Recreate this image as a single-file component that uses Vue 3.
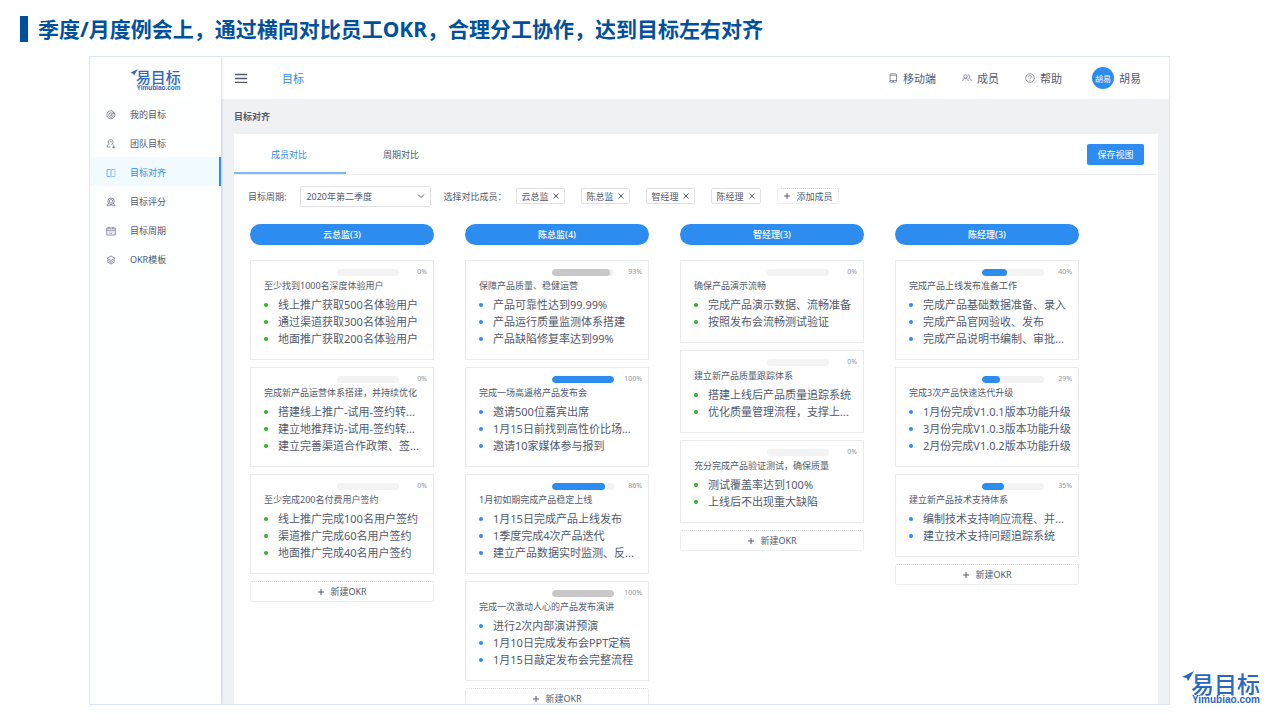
<script setup>
import { ref } from 'vue'

const navItems = [
  { label: '我的目标', icon: 'target' },
  { label: '团队目标', icon: 'team' },
  { label: '目标对齐', icon: 'align' },
  { label: '目标评分', icon: 'score' },
  { label: '目标周期', icon: 'calendar' },
  { label: 'OKR模板', icon: 'layers' },
]
const activeNav = ref('目标对齐')

const tabs = ['成员对比', '周期对比']
const activeTab = ref('成员对比')

const period = ref('2020年第二季度')
const members = ref(['云总监', '陈总监', '智经理', '陈经理'])

function removeMember(name) {
  members.value = members.value.filter((m) => m !== name)
}

const columns = [
  {
    title: '云总监(3)',
    dot: 'green',
    cards: [
      { title: '至少找到1000名深度体验用户', progress: 0, bar: 'blue', items: ['线上推广获取500名体验用户', '通过渠道获取300名体验用户', '地面推广获取200名体验用户'] },
      { title: '完成新产品运营体系搭建，并持续优化', progress: 0, bar: 'blue', items: ['搭建线上推广-试用-签约转...', '建立地推拜访-试用-签约转...', '建立完善渠道合作政策、签...'] },
      { title: '至少完成200名付费用户签约', progress: 0, bar: 'blue', items: ['线上推广完成100名用户签约', '渠道推广完成60名用户签约', '地面推广完成40名用户签约'] },
    ],
  },
  {
    title: '陈总监(4)',
    dot: 'blue',
    cards: [
      { title: '保障产品质量、稳健运营', progress: 93, bar: 'gray', items: ['产品可靠性达到99.99%', '产品运行质量监测体系搭建', '产品缺陷修复率达到99%'] },
      { title: '完成一场高逼格产品发布会', progress: 100, bar: 'blue', items: ['邀请500位嘉宾出席', '1月15日前找到高性价比场...', '邀请10家媒体参与报到'] },
      { title: '1月初如期完成产品稳定上线', progress: 86, bar: 'blue', items: ['1月15日完成产品上线发布', '1季度完成4次产品迭代', '建立产品数据实时监测、反...'] },
      { title: '完成一次激动人心的产品发布演讲', progress: 100, bar: 'gray', items: ['进行2次内部演讲预演', '1月10日完成发布会PPT定稿', '1月15日敲定发布会完整流程'] },
    ],
  },
  {
    title: '智经理(3)',
    dot: 'green',
    cards: [
      { title: '确保产品演示流畅', progress: 0, bar: 'blue', items: ['完成产品演示数据、流畅准备', '按照发布会流畅测试验证'] },
      { title: '建立新产品质量跟踪体系', progress: 0, bar: 'blue', items: ['搭建上线后产品质量追踪系统', '优化质量管理流程，支撑上...'] },
      { title: '充分完成产品验证测试，确保质量', progress: 0, bar: 'blue', items: ['测试覆盖率达到100%', '上线后不出现重大缺陷'] },
    ],
  },
  {
    title: '陈经理(3)',
    dot: 'blue',
    cards: [
      { title: '完成产品上线发布准备工作', progress: 40, bar: 'blue', items: ['完成产品基础数据准备、录入', '完成产品官网验收、发布', '完成产品说明书编制、审批...'] },
      { title: '完成3次产品快速迭代升级', progress: 29, bar: 'blue', items: ['1月份完成V1.0.1版本功能升级', '3月份完成V1.0.3版本功能升级', '2月份完成V1.0.2版本功能升级'] },
      { title: '建立新产品技术支持体系', progress: 35, bar: 'blue', items: ['编制技术支持响应流程、并...', '建立技术支持问题追踪系统'] },
    ],
  },
]
</script>

<template>
  <div class="slide">
    <h1 class="headline">季度/月度例会上，通过横向对比员工OKR，合理分工协作，达到目标左右对齐</h1>

    <div class="app">
      <aside class="sidebar">
        <a class="brand" href="#" aria-label="易目标">
          <svg class="logo" viewBox="0 0 80 34">
            <path d="M0 6 12 0 6 10 4.500 7z" />
            <text class="logo-name" x="9" y="22">易目标</text>
            <text class="logo-url" x="10" y="32">Yimubiao.com</text>
          </svg>
        </a>
        <nav class="nav">
          <a
            v-for="item in navItems"
            :key="item.label"
            href="#"
            class="nav-item"
            :class="{ active: item.label === activeNav }"
            @click.prevent="activeNav = item.label"
          >
            <svg class="nav-icon" viewBox="0 0 20 20">
              <template v-if="item.icon === 'target'">
                <path d="M14.500 3.200A8 8 0 1 0 17.300 7" />
                <path d="M12 6.200A4.500 4.500 0 1 0 14.300 9" />
                <path d="M10 10.500 17 3.500M14 3v3.500h3.500" />
                <circle cx="10" cy="10.500" r="1" />
              </template>
              <template v-else-if="item.icon === 'team'">
                <path d="M5 9C3 4 6 1.500 9.500 1.500S15 4 13.500 8c-.5 1.500-1.500 2.500-3 3" />
                <path d="M7.500 5.500h4M7 9.500c-3 1-5 3-5 6.500h7M13 11.500c1.500.5 2.500 1 3 2" />
                <path d="M12.500 16.500h6M15.500 14v5" />
              </template>
              <template v-else-if="item.icon === 'align'">
                <path d="M8 3H2v14h6M10 1.500v17" />
                <path d="M12 3h6v14h-6" stroke-dasharray="3 1.500" />
              </template>
              <template v-else-if="item.icon === 'score'">
                <circle cx="10" cy="8.500" r="6.500" />
                <circle cx="10" cy="8.500" r="3.500" />
                <path d="M5 13 2 17.500h5M15 13l3 4.500h-5M7 17.500c1-2 5-2 6 0" />
              </template>
              <template v-else-if="item.icon === 'calendar'">
                <path d="M1.500 4h17v14h-17zM1.500 8.500h17M6 1.500v5M14 1.500v5" />
                <path d="M5.500 12h2M9.500 12h2M13 12h2M5.500 15h2M9.500 15h2" />
              </template>
              <template v-else>
                <path d="M10 2 18 6.500 10 11 2 6.500zM2 10l8 4.500L18 10M2 13.500l8 4.500 8-4.500" />
              </template>
            </svg>
            <span>{{ item.label }}</span>
          </a>
        </nav>
      </aside>

      <div class="body">
        <header class="topbar">
          <button class="menu-toggle" type="button" aria-label="菜单">
            <svg viewBox="0 0 12 10"><path d="M0 1.500h12M0 5.500h12M0 9.500h12" /></svg>
          </button>
          <a class="top-link current" href="#">目标</a>
          <div class="top-actions">
            <a class="top-link" href="#">
              <svg class="top-icon" viewBox="0 0 20 20">
                <rect x="4" y="1.500" width="13" height="17" rx="2" />
                <path d="M4 4.500h13M4 15h13M9 17h3" />
              </svg>
              <span>移动端</span>
            </a>
            <a class="top-link" href="#">
              <svg class="top-icon" viewBox="0 0 20 20">
                <circle cx="7" cy="7" r="3.500" />
                <path d="M1.500 16c0-3.500 2-5.500 5.500-5.500s5.500 2 5.500 5.500M12 3.500c4 0 4 6.500 1 7M14.500 10.500c2.500.5 4 2.500 4 5.500" />
              </svg>
              <span>成员</span>
            </a>
            <a class="top-link" href="#">
              <svg class="top-icon" viewBox="0 0 20 20">
                <circle cx="10" cy="10" r="8.500" />
                <path d="M7.200 8c0-3.800 5.600-3.800 5.600-.5 0 2-2.800 2-2.800 4.500M10 13.500v1.800" />
              </svg>
              <span>帮助</span>
            </a>
            <a class="user" href="#">
              <span class="avatar">胡易</span>
              <span>胡易</span>
            </a>
          </div>
        </header>

        <main class="content">
          <h2 class="page-title">目标对齐</h2>
          <section class="panel">
            <div class="tabs">
              <button
                v-for="tab in tabs"
                :key="tab"
                type="button"
                class="tab"
                :class="{ active: tab === activeTab }"
                @click="activeTab = tab"
              >{{ tab }}</button>
              <button class="save" type="button">保存视图</button>
            </div>

            <div class="filters">
              <label for="period">目标周期:</label>
              <div class="select">
                <select id="period" v-model="period">
                  <option>2020年第二季度</option>
                  <option>2020年第一季度</option>
                </select>
                <svg viewBox="0 0 8 8"><path d="M1 2.500 4 5.500 7 2.500" /></svg>
              </div>
              <span class="members-label">选择对比成员：</span>
              <div class="tags">
                <span v-for="name in members" :key="name" class="tag">
                  {{ name }}
                  <button type="button" :aria-label="'移除' + name" @click="removeMember(name)">
                    <svg viewBox="0 0 8 8"><path d="M1.500 1.500l5 5M6.500 1.500l-5 5" /></svg>
                  </button>
                </span>
                <button class="add-member" type="button">
                  <svg class="plus" viewBox="0 0 8 8"><path d="M4 1v6M1 4h6" /></svg>
                  <span>添加成员</span>
                </button>
              </div>
            </div>

            <div class="board">
              <section v-for="column in columns" :key="column.title" class="column">
                <h3 class="column-title">{{ column.title }}</h3>
                <article v-for="card in column.cards" :key="card.title" class="card">
                  <div class="progress">
                    <div class="track">
                      <div class="fill" :class="card.bar" :style="{ width: card.progress + '%' }"></div>
                    </div>
                    <span class="percent">{{ card.progress }}%</span>
                  </div>
                  <h4 class="card-title">{{ card.title }}</h4>
                  <ul class="results" :class="column.dot">
                    <li v-for="text in card.items" :key="text">{{ text }}</li>
                  </ul>
                </article>
                <button class="add-okr" type="button">
                  <svg class="plus" viewBox="0 0 8 8"><path d="M4 1v6M1 4h6" /></svg>
                  <span>新建OKR</span>
                </button>
              </section>
            </div>
          </section>
        </main>
      </div>
    </div>

    <svg class="logo corner-logo" viewBox="0 0 80 34" role="img" aria-label="易目标">
      <path d="M0 6 12 0 6 10 4.500 7z" />
      <text class="logo-name" x="9" y="22">易目标</text>
      <text class="logo-url" x="10" y="32">Yimubiao.com</text>
    </svg>
  </div>
</template>

<style>
body {
  margin: 0;
  background: #fff;
}
</style>

<style scoped>
* {
  box-sizing: border-box;
}

.slide {
  position: relative;
  display: flex;
  flex-direction: column;
  height: 100vh;
  padding: 16px 0 15px;
  overflow: hidden;
  font-family: "Noto Sans", "Noto Sans CJK SC", sans-serif;
  font-size: 9px;
  color: #515a6e;
}

h1, h2, h3, h4, ul {
  margin: 0;
  padding: 0;
}

a {
  color: inherit;
  text-decoration: none;
}

button, select {
  margin: 0;
  padding: 0;
  border: 0;
  background: none;
  font: inherit;
  color: inherit;
  cursor: pointer;
}

svg {
  flex: none;
  fill: none;
  stroke: currentColor;
}

.headline {
  flex: none;
  margin: 0 20px 14px;
  padding-left: 10px;
  border-left: 8px solid #00509c;
  font-size: 21px;
  line-height: 26px;
  font-weight: 700;
  color: #00509c;
}

.app {
  flex: 1;
  display: flex;
  min-height: 0;
  margin: 0 110px 0 89px;
  border: 1px solid #dbe9f6;
  overflow: hidden;
}

/* sidebar */
.sidebar {
  position: relative;
  z-index: 1;
  flex: none;
  width: 131px;
  background: #fdfefe;
  box-shadow: 1px 0 2px rgba(60, 70, 90, 0.18);
}

.brand {
  display: flex;
  justify-content: center;
  align-items: center;
  height: 42px;
  padding-top: 3px;
  background: #fff;
}

.logo {
  display: block;
  width: 52px;
  height: 22px;
  fill: #2b66bf;
  stroke: none;
  overflow: visible;
}

.logo-name {
  font-family: "Noto Sans CJK SC", sans-serif;
  font-size: 23px;
  font-weight: 500;
}

.logo-url {
  font-family: "Liberation Sans", sans-serif;
  font-size: 10px;
  font-weight: 700;
}

.nav-item {
  display: flex;
  align-items: center;
  gap: 14px;
  height: 29px;
  padding: 2px 0 0 16px;
  border-right: 2px solid transparent;
}

.nav-item.active {
  background: #f0faff;
  border-right-color: #2d8cf0;
  color: #2d8cf0;
}

.nav-icon {
  width: 10px;
  height: 10px;
  stroke-width: 1.3;
}

/* top bar */
.body {
  flex: 1;
  display: flex;
  flex-direction: column;
  min-width: 0;
}

.topbar {
  flex: none;
  display: flex;
  align-items: center;
  height: 42px;
  padding: 0 28px 0 14px;
  background: #fff;
  font-size: 11px;
}

.menu-toggle {
  display: flex;
  margin-right: 35px;
}

.menu-toggle svg {
  width: 12px;
  height: 10px;
  stroke-width: 1.4;
}

.top-link {
  display: flex;
  align-items: center;
  gap: 5px;
}

.top-link.current {
  color: #2d8cf0;
}

.top-icon {
  width: 10px;
  height: 10px;
  stroke-width: 1.3;
}

.top-actions {
  display: flex;
  align-items: center;
  gap: 26px;
  margin-left: auto;
}

.user {
  display: flex;
  align-items: center;
  gap: 5px;
  margin-left: 4px;
}

.avatar {
  display: flex;
  justify-content: center;
  align-items: center;
  width: 22px;
  height: 22px;
  border-radius: 50%;
  background: #2d8cf0;
  color: #fff;
  font-size: 8px;
}

/* content */
.content {
  flex: 1;
  display: flex;
  flex-direction: column;
  min-height: 0;
  padding: 0 11px 0 13px;
  background: #f0f1f5;
}

.page-title {
  flex: none;
  font-size: 9px;
  line-height: 35px;
  font-weight: 700;
}

.panel {
  flex: 1;
  min-height: 0;
  background: #fff;
  overflow: hidden;
}

.tabs {
  display: flex;
  align-items: center;
  height: 41px;
  padding-right: 14px;
  border-bottom: 1px solid #eceef1;
}

.tab {
  align-self: stretch;
  width: 112px;
  padding: 2px 2px 0 0;
  border-bottom: 2px solid transparent;
}

.tab.active {
  border-bottom-color: #7db7f5;
  color: #2d8cf0;
}

.save {
  width: 57px;
  height: 21px;
  margin-left: auto;
  border-radius: 2px;
  background: #2d8cf0;
  color: #fff;
}

.filters {
  display: flex;
  align-items: center;
  height: 42px;
  padding: 0 14px;
}

.select {
  position: relative;
  width: 131px;
  margin: 0 12px 0 14px;
}

.select select {
  display: block;
  width: 100%;
  height: 21px;
  padding: 0 20px 0 5px;
  border: 1px solid #dfe1e5;
  border-radius: 2px;
  appearance: none;
}

.select svg {
  position: absolute;
  top: 6px;
  right: 6px;
  width: 8px;
  height: 8px;
  pointer-events: none;
}

.tags {
  display: flex;
  gap: 16px;
  margin-left: 10px;
}

.tag {
  display: flex;
  align-items: center;
  gap: 4px;
  height: 16px;
  padding: 0 4px;
  border: 1px solid #e0e2e6;
  border-radius: 2px;
}

.tag button {
  display: flex;
}

.tag svg, .plus {
  width: 8px;
  height: 8px;
}

.add-member, .add-okr {
  display: flex;
  justify-content: center;
  align-items: center;
  border: 1px dotted #dcdee2;
  border-radius: 2px;
}

.add-member {
  gap: 6px;
  height: 16px;
  padding: 0 5px;
}

/* board */
.board {
  display: grid;
  grid-template-columns: repeat(4, 1fr);
  gap: 31px;
  padding: 7px 79px 0 16px;
}

.column {
  display: flex;
  flex-direction: column;
  gap: 7px;
  min-width: 0;
}

.column-title {
  height: 21px;
  margin-bottom: 8px;
  border-radius: 11px;
  background: #2d8cf0;
  color: #fff;
  font-size: 9px;
  line-height: 21px;
  font-weight: 500;
  text-align: center;
}

.card {
  padding: 6px 6px 12px 13px;
  border: 1px solid #eaebee;
}

.progress {
  display: flex;
  justify-content: flex-end;
  align-items: center;
  height: 10px;
}

.track {
  width: 62px;
  height: 7px;
  border-radius: 4px;
  background: #f3f3f3;
  overflow: hidden;
}

.fill {
  height: 100%;
  border-radius: 4px;
}

.fill.blue {
  background: #2d8cf0;
}

.fill.gray {
  background: #c8c8c8;
}

.percent {
  width: 28px;
  color: #8f949e;
  font-size: 7px;
  line-height: 10px;
  text-align: right;
}

.card-title {
  font-size: 9px;
  line-height: 17px;
  font-weight: 400;
  white-space: nowrap;
}

.results {
  margin-top: 2px;
  list-style: none;
  font-size: 11px;
  line-height: 17px;
}

.results li {
  display: flex;
  align-items: center;
  gap: 10px;
  height: 17px;
  white-space: nowrap;
}

.results li::before {
  content: "";
  flex: none;
  width: 4px;
  height: 4px;
  border-radius: 50%;
  background: #2d8cf0;
}

.results.green li::before {
  background: #2fae2f;
}

.add-okr {
  gap: 5px;
  height: 21px;
}

.corner-logo {
  position: absolute;
  right: 18px;
  bottom: 15px;
  width: 80px;
  height: 34px;
}
</style>
